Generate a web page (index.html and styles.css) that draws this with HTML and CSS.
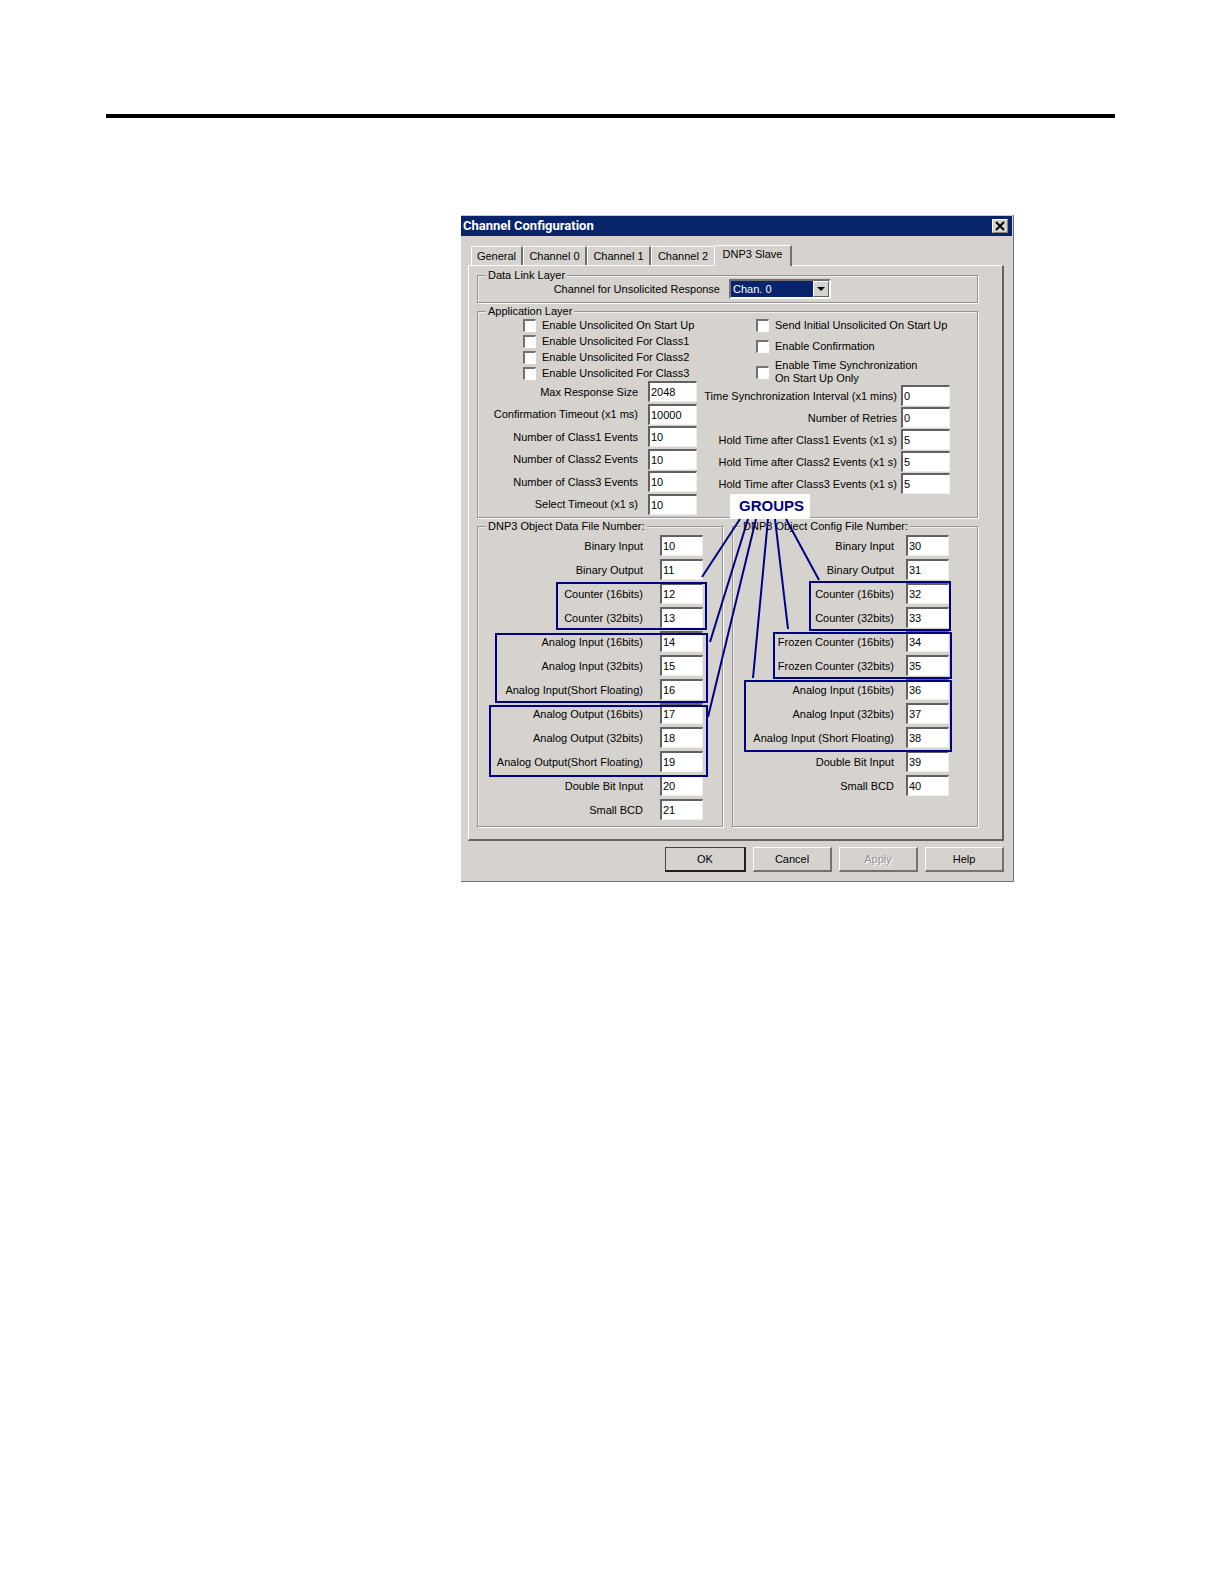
FILE: index.html
```html
<!DOCTYPE html>
<html lang="en">
<head>
<meta charset="utf-8">
<title>Channel Configuration</title>
<link rel="stylesheet" href="styles.css">
</head>
<body>
<main class="page">
  <hr class="rule">
  <div class="figure">
    <form class="dialog">
      <header class="titlebar">
        <h1 class="title">Channel Configuration</h1>
        <button type="button" class="close" aria-label="Close">
          <svg width="10" height="10" viewBox="0 0 10 10"><path d="M1 1L9 9M9 1L1 9" stroke="#000" stroke-width="2"/></svg>
        </button>
      </header>
      <div class="tabs" role="tablist">
        <button type="button" class="tab" role="tab">General</button>
        <button type="button" class="tab tab-wide" role="tab">Channel 0</button>
        <button type="button" class="tab tab-wide" role="tab">Channel 1</button>
        <button type="button" class="tab tab-wide" role="tab">Channel 2</button>
        <button type="button" class="tab tab-active" role="tab" aria-selected="true">DNP3 Slave</button>
      </div>
      <div class="panel" role="tabpanel">
        <fieldset class="group">
          <legend>Data Link Layer</legend>
          <div class="link-row">
            <label for="chan">Channel for Unsolicited Response</label>
            <span class="combo">
              <select id="chan"><option>Chan. 0</option></select>
              <span class="combo-arrow"><svg width="8" height="4" viewBox="0 0 8 4"><path d="M0 0H8L4 4Z"/></svg></span>
            </span>
          </div>
        </fieldset>
        <fieldset class="group">
          <legend>Application Layer</legend>
          <div class="app">
            <div class="app-left">
              <div class="checks">
                <label class="check"><input type="checkbox">Enable Unsolicited On Start Up</label>
                <label class="check"><input type="checkbox">Enable Unsolicited For Class1</label>
                <label class="check"><input type="checkbox">Enable Unsolicited For Class2</label>
                <label class="check"><input type="checkbox">Enable Unsolicited For Class3</label>
              </div>
              <div class="fields fields-left">
                <label for="a1">Max Response Size</label><input id="a1" type="text" value="2048">
                <label for="a2">Confirmation Timeout (x1 ms)</label><input id="a2" type="text" value="10000">
                <label for="a3">Number of Class1 Events</label><input id="a3" type="text" value="10">
                <label for="a4">Number of Class2 Events</label><input id="a4" type="text" value="10">
                <label for="a5">Number of Class3 Events</label><input id="a5" type="text" value="10">
                <label for="a6">Select Timeout (x1 s)</label><input id="a6" type="text" value="10">
              </div>
            </div>
            <div class="app-right">
              <div class="checks checks-right">
                <label class="check"><input type="checkbox">Send Initial Unsolicited On Start Up</label>
                <label class="check"><input type="checkbox">Enable Confirmation</label>
                <label class="check check-tall"><input type="checkbox"><span>Enable Time Synchronization<br>On Start Up Only</span></label>
              </div>
              <div class="fields fields-right">
                <label for="b1">Time Synchronization Interval (x1 mins)</label><input id="b1" type="text" value="0">
                <label for="b2">Number of Retries</label><input id="b2" type="text" value="0">
                <label for="b3">Hold Time after Class1 Events (x1 s)</label><input id="b3" type="text" value="5">
                <label for="b4">Hold Time after Class2 Events (x1 s)</label><input id="b4" type="text" value="5">
                <label for="b5">Hold Time after Class3 Events (x1 s)</label><input id="b5" type="text" value="5">
              </div>
            </div>
          </div>
        </fieldset>
        <div class="files">
          <fieldset class="group">
            <legend>DNP3 Object Data File Number:</legend>
            <div class="fields fields-data">
              <label for="c1">Binary Input</label><input id="c1" type="text" value="10">
              <label for="c2">Binary Output</label><input id="c2" type="text" value="11">
              <label for="c3">Counter (16bits)</label><input id="c3" type="text" value="12">
              <label for="c4">Counter (32bits)</label><input id="c4" type="text" value="13">
              <label for="c5">Analog Input (16bits)</label><input id="c5" type="text" value="14">
              <label for="c6">Analog Input (32bits)</label><input id="c6" type="text" value="15">
              <label for="c7">Analog Input(Short Floating)</label><input id="c7" type="text" value="16">
              <label for="c8">Analog Output (16bits)</label><input id="c8" type="text" value="17">
              <label for="c9">Analog Output (32bits)</label><input id="c9" type="text" value="18">
              <label for="c10">Analog Output(Short Floating)</label><input id="c10" type="text" value="19">
              <label for="c11">Double Bit Input</label><input id="c11" type="text" value="20">
              <label for="c12">Small BCD</label><input id="c12" type="text" value="21">
            </div>
          </fieldset>
          <fieldset class="group">
            <legend>DNP3 Object Config File Number:</legend>
            <div class="fields fields-config">
              <label for="d1">Binary Input</label><input id="d1" type="text" value="30">
              <label for="d2">Binary Output</label><input id="d2" type="text" value="31">
              <label for="d3">Counter (16bits)</label><input id="d3" type="text" value="32">
              <label for="d4">Counter (32bits)</label><input id="d4" type="text" value="33">
              <label for="d5">Frozen Counter (16bits)</label><input id="d5" type="text" value="34">
              <label for="d6">Frozen Counter (32bits)</label><input id="d6" type="text" value="35">
              <label for="d7">Analog Input (16bits)</label><input id="d7" type="text" value="36">
              <label for="d8">Analog Input (32bits)</label><input id="d8" type="text" value="37">
              <label for="d9">Analog Input (Short Floating)</label><input id="d9" type="text" value="38">
              <label for="d10">Double Bit Input</label><input id="d10" type="text" value="39">
              <label for="d11">Small BCD</label><input id="d11" type="text" value="40">
            </div>
          </fieldset>
        </div>
      </div>
      <footer class="actions">
        <button type="button" class="btn btn-default">OK</button>
        <button type="button" class="btn">Cancel</button>
        <button type="button" class="btn" disabled>Apply</button>
        <button type="button" class="btn">Help</button>
      </footer>
      <!-- Callouts: outlines round each group and lines to their caption -->
      <svg class="callouts" width="553" height="667" viewBox="0 0 553 667">
        <g fill="none" stroke="#000084" stroke-width="2">
          <rect x="96" y="368" width="149" height="46"/>
          <rect x="35" y="419" width="211" height="68"/>
          <rect x="29" y="491" width="217" height="70"/>
          <rect x="349" y="367" width="140" height="48"/>
          <rect x="313" y="418" width="177" height="45"/>
          <rect x="284" y="466" width="206" height="70"/>
          <path d="M279 304L241 362M287 304L249 427M295 304L247 502M307 304L292 463M314 304L327 414M325 304L358 365"/>
        </g>
      </svg>
      <strong class="caption">GROUPS</strong>
    </form>
  </div>
</main>
</body>
</html>
```
FILE: styles.css
```css
* { box-sizing: border-box; }

body {
  margin: 0;
  background: #fff;
  color: #000;
}

.page {
  min-height: 100vh;
  padding: 114px 109px 0 106px;
}

.rule {
  height: 4px;
  margin: 0 0 97px;
  border: 0;
  background: #000;
}

.figure {
  display: grid;
  grid-template-columns: minmax(0, 553px);
  padding-left: 355px;
}

.dialog {
  position: relative;
  padding: 1px 2px 10px 0;
  background: #d6d3ce;
  box-shadow: inset -1px -1px #737173, inset 0 1px #c6c7ce;
  font: 11px/16px "Liberation Sans", Arial, sans-serif;
  white-space: nowrap;
}

button, input, select { font: inherit; color: inherit; }

.titlebar {
  display: flex;
  align-items: center;
  justify-content: space-between;
  height: 20px;
  padding: 0 4px 0 2px;
  background: #08246b;
}

.title {
  margin: 0;
  color: #fff;
  font: 700 13px/16px Roboto, sans-serif;
}

.close {
  display: grid;
  place-items: center;
  width: 16px;
  height: 14px;
  padding: 0;
  border: 1px solid;
  border-color: #fff #848284 #848284 #fff;
  background: #d6d3ce;
}

.tabs {
  display: flex;
  align-items: flex-end;
  padding: 9px 0 0 10px;
}

.tab {
  width: 52px;
  height: 19px;
  padding: 0;
  border: solid;
  border-width: 1px 2px 0 1px;
  border-color: #fff #73716b #fff #fff;
  border-radius: 2px 2px 0 0;
  background: #d6d3ce;
}

.tab-wide { width: 64px; }

.tab-wide:nth-child(4) {
  width: 63px;
  border-right-width: 0;
}

.tab-active {
  width: 78px;
  height: 21px;
  margin-bottom: -1px;
  padding-bottom: 5px;
}

.panel {
  margin: 0 8px 0 7px;
  padding: 5px 24px 12px 8px;
  border: solid;
  border-width: 1px 2px 2px 1px;
  border-color: #fff #636163 #636163 #fff;
}

.group {
  min-width: 0;
  margin: 0 0 4px;
  padding: 0;
  border: 1px solid #949294;
  box-shadow: 1px 1px #fff, inset 1px 1px #efefe7;
}

.group legend {
  margin-left: 8px;
  padding: 0 2px;
  background: #d6d3ce;
  line-height: 8px;
}

.link-row {
  display: flex;
  align-items: center;
  justify-content: flex-end;
  gap: 9px;
  padding: 0 146px 3px 0;
}

.combo {
  position: relative;
  width: 102px;
  height: 20px;
}

.combo select {
  appearance: none;
  display: block;
  width: 100%;
  height: 20px;
  padding: 0 0 0 2px;
  border: 2px solid;
  border-color: #737173 #fff #fff #737173;
  border-radius: 0;
  background: #08246b;
  color: #fff;
}

.combo-arrow {
  position: absolute;
  top: 2px;
  right: 2px;
  display: grid;
  place-items: center;
  width: 16px;
  height: 16px;
  border: 1px solid;
  border-color: #fff #636163 #636163 #fff;
  background: #d6d3ce;
  pointer-events: none;
}

.app {
  display: grid;
  grid-template-columns: minmax(0, 219fr) minmax(0, 253fr);
  padding: 2px 27px 2px 0;
}

.app-left, .app-right {
  display: flex;
  flex-direction: column;
}

.checks { padding-left: 45px; }

.checks-right {
  display: grid;
  gap: 5px;
  padding-left: 59px;
}

.check {
  display: flex;
  align-items: center;
  gap: 6px;
}

.check-tall { line-height: 13px; }

.check input {
  appearance: none;
  flex: none;
  width: 13px;
  height: 13px;
  margin: 0;
  border: solid;
  border-width: 2px 1px 1px 2px;
  border-color: #737173 #fff #fff #737173;
  background: #fff;
}

.fields {
  display: grid;
  grid-template-columns: minmax(0, 1fr) 49px;
  column-gap: 10px;
  align-items: center;
  text-align: right;
}

.fields input {
  width: 100%;
  height: 21px;
  padding: 0 1px;
  border: solid;
  border-width: 2px 1px 1px 2px;
  border-color: #636163 #efefef #efefef #636163;
  border-radius: 0;
  background: #fff;
}

.fields-left {
  min-height: 134px;
  align-content: space-between;
}

.fields-right {
  row-gap: 1px;
  column-gap: 4px;
}

.fields-data, .fields-config {
  grid-template-columns: minmax(0, 1fr) 43px;
  column-gap: 17px;
  row-gap: 3px;
  padding: 5px 19px 6px 0;
}

.fields-config {
  column-gap: 12px;
  padding-right: 28px;
}

.files {
  display: grid;
  grid-template-columns: 1fr 1fr;
  gap: 9px;
}

.files .group { margin-bottom: 0; }

.actions {
  display: flex;
  justify-content: flex-end;
  gap: 7px;
  padding: 6px 8px 0 0;
}

.btn {
  width: 79px;
  height: 25px;
  padding: 0;
  border: solid;
  border-width: 1px 2px 2px 1px;
  border-color: #fff #737173 #737173 #fff;
  background: #d6d3ce;
}

.btn-default {
  width: 81px;
  border-color: #424142 #212021 #212021 #424142;
}

.btn:disabled {
  color: #949294;
  text-shadow: 1px 1px #fff;
}

.callouts {
  position: absolute;
  top: 0;
  left: 0;
  pointer-events: none;
}

.caption {
  position: absolute;
  top: 279px;
  left: 269px;
  width: 80px;
  padding-left: 3px;
  background: #fff;
  color: #000084;
  font: 700 15px/24px "Liberation Sans", Arial, sans-serif;
  text-align: center;
}
```
